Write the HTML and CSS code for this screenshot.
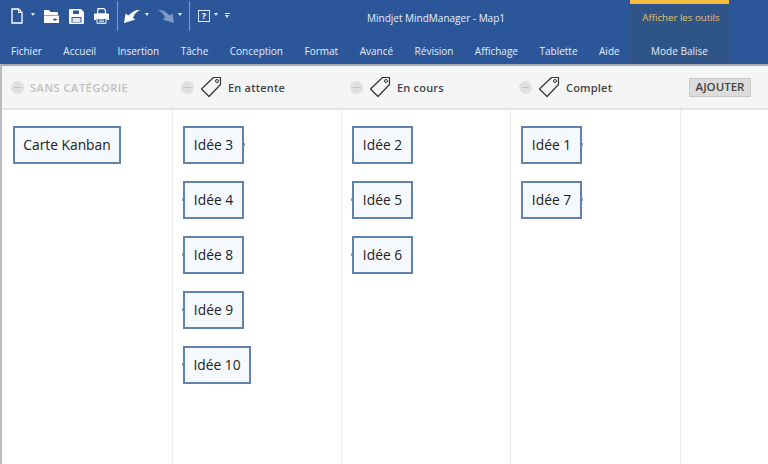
FILE: index.html
```html
<!DOCTYPE html>
<html lang="fr">
<head>
<meta charset="utf-8">
<title>Mindjet MindManager - Map1</title>
<link rel="stylesheet" href="styles.css">
</head>
<body>
<div class="app">
  <header class="ribbon">
    <div class="ribbon-main">
      <div class="toprow">
        <div class="qat">
          <svg class="ico ico-new" width="12" height="16" viewBox="0 0 12 16"><path d="M1 1h6.500L11 4.500V15H1z" fill="none" stroke="#fff" stroke-width="1.300"/><path d="M7.500 1v3.500H11" fill="none" stroke="#fff"/></svg>
          <span class="caret caret-a"></span>
          <svg class="ico ico-open" width="15" height="14" viewBox="0 0 15 14"><path d="M0 1h5l1.500 2H14v3H0z" fill="#fff"/><path d="M0 6.500h15V14H0z" fill="#fff"/><path d="M9 10.500h4M11 9v3" stroke="#2b579a" stroke-width="1"/></svg>
          <svg class="ico ico-save" width="15" height="15" viewBox="0 0 15 15"><path d="M1 0h11l3 3v11a1 1 0 0 1-1 1H1a1 1 0 0 1-1-1V1a1 1 0 0 1 1-1z" fill="#fff"/><path d="M4 1.500h6v3.500H4zM2.500 8h10v5.500h-10z" fill="#2b579a"/><path d="M3.500 9h8v4h-8z" fill="#dfe7f3"/></svg>
          <svg class="ico ico-print" width="15" height="16" viewBox="0 0 15 16"><path d="M4 .7h6l1.500 2V6h-8z" fill="none" stroke="#fff" stroke-width="1.200"/><path d="M0 6.500a1 1 0 0 1 1-1h13a1 1 0 0 1 1 1V12h-2.500v-2h-10v2H0z" fill="#fff"/><path d="M3 10.500h9V15.300H3z" fill="#2b579a" stroke="#fff" stroke-width="1"/><path d="M5 12h5M5 13.800h5" stroke="#fff" stroke-width=".8"/></svg>
          <span class="sep sep-a"></span>
          <svg class="ico ico-undo" width="16" height="14" viewBox="0 0 16 14"><path d="M0 14 1.500 4.500 4.500 6.500C8 2.500 12 .5 16 1 12.500 2.500 10 5.500 9 9L11.500 10.500z" fill="#fff"/></svg>
          <span class="caret caret-b"></span>
          <svg class="ico ico-redo" width="16" height="14" viewBox="0 0 16 14"><path d="M16 14 14.500 4.500 11.500 6.500C8 2.500 4 .5 0 1 3.500 2.500 6 5.500 7 9L4.500 10.500z" fill="#7d9ac4"/></svg>
          <span class="caret caret-c"></span>
          <span class="sep sep-b"></span>
          <span class="help">?</span>
          <span class="caret caret-d"></span>
          <span class="more"><i></i><b></b></span>
        </div>
        <div class="title">Mindjet MindManager - Map1</div>
      </div>
      <nav class="tabs">
        <span>Fichier</span>
        <span>Accueil</span>
        <span>Insertion</span>
        <span>Tâche</span>
        <span>Conception</span>
        <span>Format</span>
        <span>Avancé</span>
        <span>Révision</span>
        <span>Affichage</span>
        <span>Tablette</span>
        <span>Aide</span>
      </nav>
    </div>
    <div class="tools">
      <div class="tools-title">Afficher les outils</div>
      <div class="tools-tab">Mode Balise</div>
    </div>
  </header>

  <main class="board">
    <section class="col col-first">
      <div class="col-head">
        <span class="minus"></span>
        <span class="uncat">SANS CATÉGORIE</span>
      </div>
      <div class="cards">
        <div class="card card-wide">Carte Kanban</div>
      </div>
    </section>
    <section class="col">
      <div class="col-head">
        <span class="minus"></span>
        <svg class="tag" width="22" height="22" viewBox="0 0 22 22"><path d="M13.500 1.500 20.500 1.500 20.500 8.500 9 20.500 1.500 13z" fill="none" stroke="#333" stroke-width="1.200" stroke-linejoin="round"/><circle cx="17" cy="5" r="1.500" fill="none" stroke="#333" stroke-width="1"/></svg>
        <span class="cat">En attente</span>
      </div>
      <div class="cards">
        <div class="card tick-r">Idée 3</div>
        <div class="card tick-l">Idée 4</div>
        <div class="card tick-l">Idée 8</div>
        <div class="card tick-l">Idée 9</div>
        <div class="card card-ten tick-l">Idée 10</div>
      </div>
    </section>
    <section class="col">
      <div class="col-head">
        <span class="minus"></span>
        <svg class="tag" width="22" height="22" viewBox="0 0 22 22"><path d="M13.500 1.500 20.500 1.500 20.500 8.500 9 20.500 1.500 13z" fill="none" stroke="#333" stroke-width="1.200" stroke-linejoin="round"/><circle cx="17" cy="5" r="1.500" fill="none" stroke="#333" stroke-width="1"/></svg>
        <span class="cat">En cours</span>
      </div>
      <div class="cards">
        <div class="card">Idée 2</div>
        <div class="card tick-l">Idée 5</div>
        <div class="card tick-l">Idée 6</div>
      </div>
    </section>
    <section class="col">
      <div class="col-head">
        <span class="minus"></span>
        <svg class="tag" width="22" height="22" viewBox="0 0 22 22"><path d="M13.500 1.500 20.500 1.500 20.500 8.500 9 20.500 1.500 13z" fill="none" stroke="#333" stroke-width="1.200" stroke-linejoin="round"/><circle cx="17" cy="5" r="1.500" fill="none" stroke="#333" stroke-width="1"/></svg>
        <span class="cat">Complet</span>
      </div>
      <div class="cards">
        <div class="card tick-r">Idée 1</div>
        <div class="card tick-r">Idée 7</div>
      </div>
    </section>
    <section class="col col-add">
      <div class="col-head col-head-add">
        <span class="add">AJOUTER</span>
      </div>
    </section>
  </main>
</div>
</body>
</html>
```

FILE: styles.css
```css
html, body {
  margin: 0;
  padding: 0;
  width: 768px;
  height: 464px;
  overflow: hidden;
  background: #fff;
  font-family: "Open Sans", "Noto Sans", sans-serif;
}
.app {
  display: flex;
  flex-direction: column;
  height: 464px;
}
.ribbon {
  display: flex;
  height: 64px;
  background: #2b579a;
  color: #e6ecf5;
  flex: none;
}
.ribbon-main {
  flex: none;
  width: 630px;
  display: flex;
  flex-direction: column;
}
.toprow {
  display: flex;
  height: 36px;
  position: relative;
}
.qat {
  display: flex;
  align-items: center;
  padding-left: 11px;
  height: 32px;
}
.ico { flex: none; display: block; }
.caret {
  width: 0;
  height: 0;
  border-left: 2.500px solid transparent;
  border-right: 2.500px solid transparent;
  border-top: 3px solid #e6ecf5;
  flex: none;
}
.caret-a { margin: 0 0 4px 8px; }
.ico-open { margin-left: 9px; }
.ico-save { margin-left: 10px; }
.ico-print { margin-left: 10px; }
.sep {
  width: 1px;
  height: 30px;
  background: #7f9cc6;
  flex: none;
}
.sep-a { margin-left: 8px; }
.ico-undo { margin-left: 6px; }
.caret-b { margin: 0 0 4px 5px; }
.ico-redo { margin-left: 9px; }
.caret-c { margin: 0 0 4px 4px; }
.sep-b { margin-left: 7px; }
.help {
  margin-left: 8px;
  width: 10px;
  height: 10px;
  border: 1px solid #dfe7f3;
  color: #fff;
  font-size: 9px;
  font-weight: 700;
  line-height: 10px;
  text-align: center;
  flex: none;
}
.caret-d { margin: 0 0 4px 4px; }
.more {
  margin: 0 0 2px 6.500px;
  display: flex;
  flex-direction: column;
  align-items: center;
  gap: 1px;
}
.more i {
  display: block;
  width: 5px;
  height: 1px;
  background: #e6ecf5;
}
.more b {
  display: block;
  width: 0;
  height: 0;
  border-left: 2.500px solid transparent;
  border-right: 2.500px solid transparent;
  border-top: 3px solid #e6ecf5;
}
.title {
  position: absolute;
  left: 367px;
  top: 9px;
  font-size: 10px;
  line-height: 18px;
  white-space: nowrap;
  color: #e8edf6;
}
.tabs {
  display: flex;
  align-items: center;
  gap: 21.500px;
  height: 28px;
  padding: 2px 0 0 11px;
  box-sizing: border-box;
  font-size: 10px;
  white-space: nowrap;
}
.tools {
  flex: none;
  width: 99px;
  height: 64px;
  background: #2f5487;
  border-top: 4px solid #f2bc3c;
  box-sizing: border-box;
  display: flex;
  flex-direction: column;
  align-items: center;
  font-size: 10px;
  white-space: nowrap;
}
.tools-title {
  flex: none;
  height: 32px;
  line-height: 28px;
  font-size: 9.700px;
  padding-left: 3px;
  color: #e3c36f;
}
.tools-tab {
  flex: none;
  height: 28px;
  line-height: 30px;
  color: #e6ecf5;
}
.board {
  flex: 1;
  display: grid;
  grid-template-columns: 171px 169px 169px 169.500px 1fr;
  border-top: 2px solid #a7acb3;
  border-left: 2px solid #b9bcc0;
}
.col {
  display: flex;
  flex-direction: column;
  min-width: 0;
  border-right: 1px solid #ececec;
}
.col-add { border-right: 0; }
.col-head {
  height: 44px;
  flex: none;
  box-sizing: border-box;
  display: flex;
  align-items: center;
  padding-left: 8px;
  background: #f5f5f5;
  border-bottom: 2px solid #e4e4e4;
  margin-right: -1px;
}
.col-first .col-head { padding-left: 9px; }
.col-add .col-head { margin-right: 0; }
.minus {
  flex: none;
  width: 13px;
  height: 13px;
  border-radius: 50%;
  background: #e0e0e0;
  position: relative;
  margin-right: 6px;
}
.minus::after {
  content: "";
  position: absolute;
  left: 3px;
  top: 6px;
  width: 7px;
  height: 1px;
  background: #c4c4c4;
}
.uncat {
  font-size: 11px;
  font-weight: 600;
  letter-spacing: .55px;
  color: #c0c0c0;
  white-space: nowrap;
}
.tag { flex: none; margin-right: 6px; }
.cat {
  font-size: 11px;
  font-weight: 600;
  letter-spacing: .2px;
  color: #444;
  white-space: nowrap;
}
.col-head-add { padding-left: 8.500px; }
.add {
  box-sizing: border-box;
  height: 19px;
  width: 62px;
  background: #dcdcdc;
  border: 1px solid #c8c8c8;
  color: #444;
  font-size: 11.500px;
  font-weight: 600;
  line-height: 16px;
  text-align: center;
}
.cards {
  display: flex;
  flex-direction: column;
  align-items: flex-start;
  gap: 17px;
  padding: 16px 0 0 10px;
}
.col-first .cards { padding-left: 11px; }
.card {
  position: relative;
  box-sizing: border-box;
  height: 38px;
  width: 61px;
  border: 2px solid #5f83aa;
  background: #f5f8fc;
  color: #222;
  font-size: 13.800px;
  line-height: 34px;
  text-align: center;
  white-space: nowrap;
}
.card-wide { width: 108px; }
.card-ten { width: 68px; }
.tick-l::before,
.tick-r::after {
  content: "";
  position: absolute;
  top: 15px;
  width: 1px;
  height: 3px;
  background: #8aa4c2;
}
.tick-l::before { left: -3px; }
.tick-r::after { right: -3px; }
```
